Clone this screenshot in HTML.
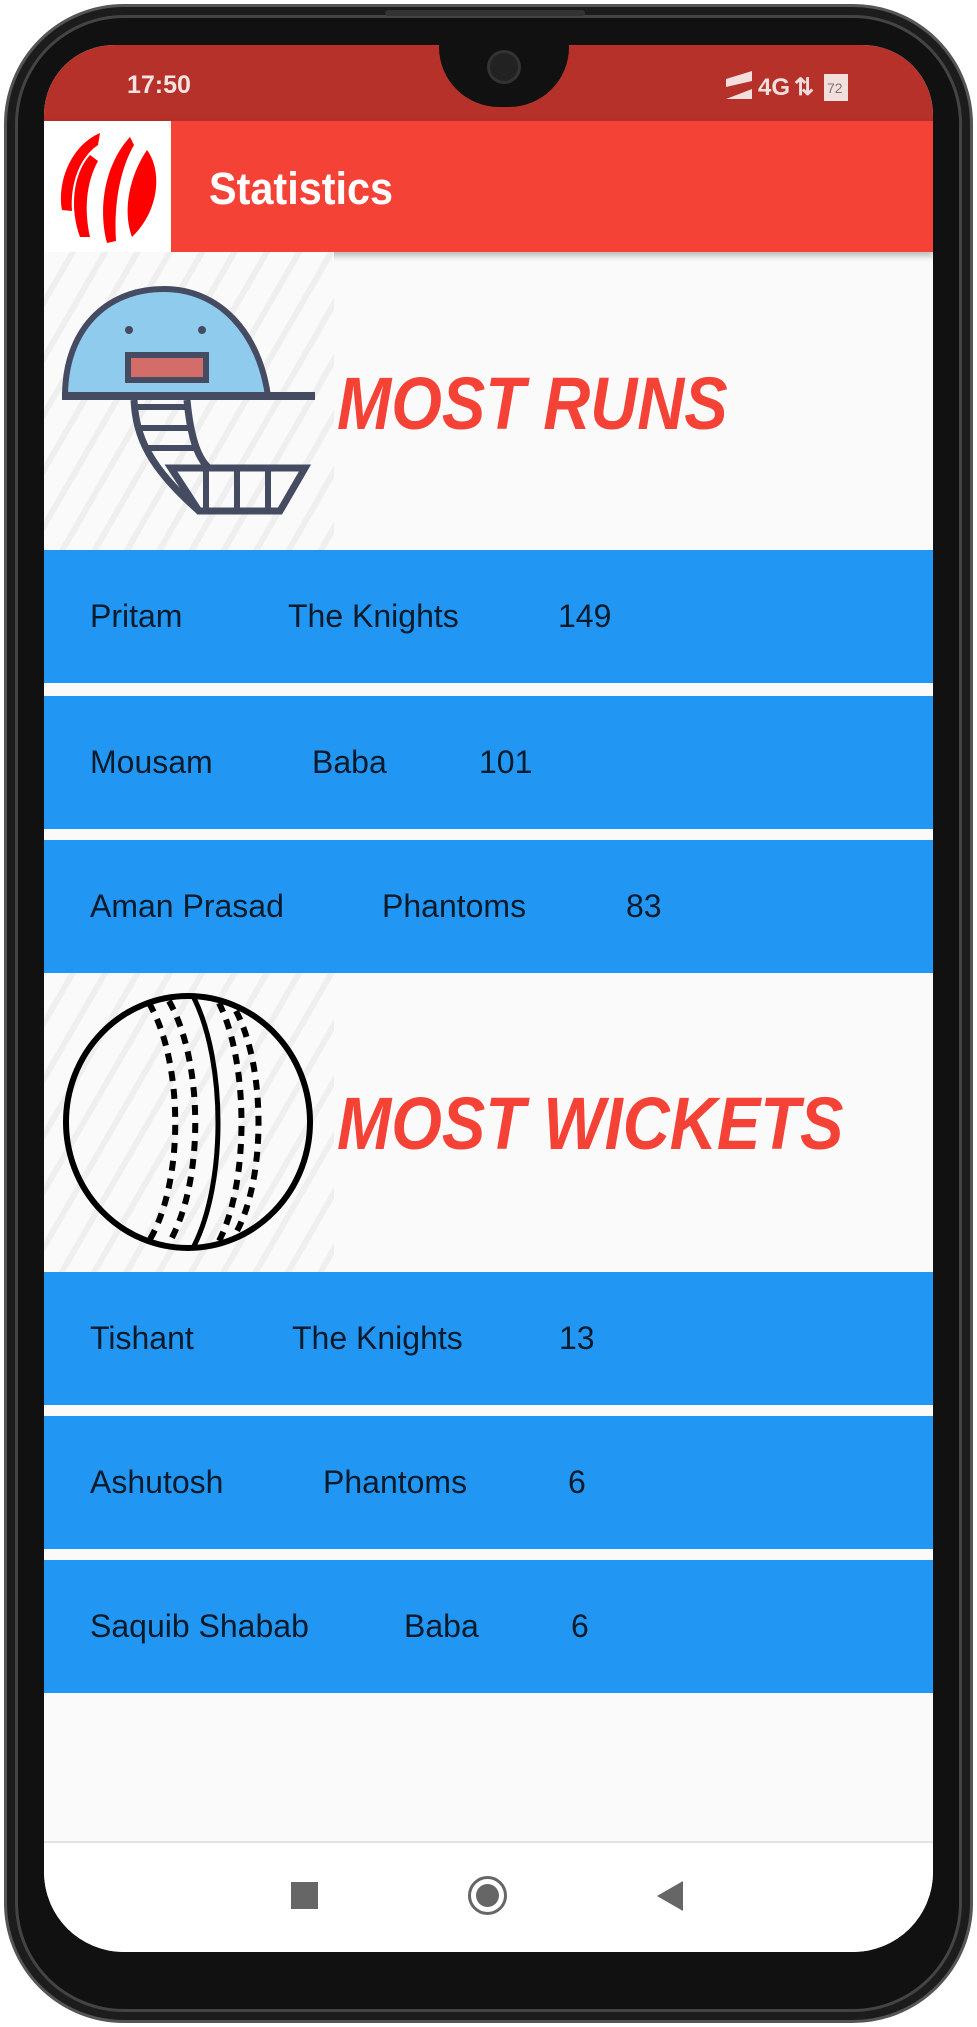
<!DOCTYPE html>
<html><head><meta charset="utf-8"><style>
*{margin:0;padding:0;box-sizing:border-box}
body{width:977px;height:2027px;background:#fff;position:relative;overflow:hidden;font-family:"Liberation Sans",sans-serif}
.abs{position:absolute}
.phone{left:4px;top:4px;width:969px;height:2019px;background:#111;border-radius:120px;border:3px solid #555;box-shadow:inset 0 0 0 8px #1c1c1c, inset 0 0 0 11px #444}
.screen{left:44px;top:45px;width:889px;height:1907px;background:#fafafa;border-radius:70px 70px 80px 80px;overflow:hidden}
.status{left:0;top:0;width:889px;height:76px;background:#b5312a}
.appbar{left:0;top:76px;width:889px;height:131px;background:#f44336;box-shadow:0 4px 6px rgba(0,0,0,.25)}
.row{left:0;width:889px;height:133px;background:#2196f3}
.row span{position:absolute;top:0;line-height:133px;font-size:32px;color:#0b1b2b}
.big{font-weight:bold;font-style:italic;color:#f44336;font-size:74px;transform:scaleX(.88);transform-origin:left top;white-space:nowrap}
.stripes{background:repeating-linear-gradient(120deg,#fafafa 0 22px,#efefef 22px 28px)}
</style></head><body>
<div class="abs phone"></div>
<div class="abs" style="left:385px;top:10px;width:200px;height:6px;background:#333;border-radius:3px"></div>
<div class="abs screen">
  <div class="abs status"></div>
  <div class="abs" style="left:395px;top:0;width:130px;height:62px;background:#111;border-radius:0 0 60px 60px"></div>
  <div class="abs" style="left:446px;top:8px;width:28px;height:28px;background:#222;border-radius:50%;box-shadow:0 0 0 3px #333"></div>
  <div class="abs" style="left:83px;top:26px;color:#f3e4e2;font-size:25px;font-weight:bold">17:50</div>
  <svg class="abs" style="left:680px;top:24px" width="190" height="34">
    <polygon points="2,10 28,2 28,12 2,18" fill="#f3dede"/><polygon points="2,30 28,20 28,30" fill="#f3dede"/>
    <text x="34" y="26" fill="#f3dede" font-size="24" font-weight="bold" font-family="Liberation Sans">4G</text>
    <text x="70" y="26" fill="#f3dede" font-size="24" font-weight="bold" font-family="Liberation Sans">⇅</text>
    <rect x="100" y="5" width="24" height="27" fill="#f3dede"/><text x="103" y="24" font-size="14" fill="#777" font-family="Liberation Sans">72</text>
  </svg>
  <div class="abs appbar"></div>
  <div class="abs" style="left:0;top:76px;width:127px;height:131px;background:#fff"></div>
  <svg class="abs" style="left:8px;top:80px" width="115" height="125">
    <path d="M48 8 C20 20 5 55 10 85 L20 86 C18 58 28 32 46 20 Z" fill="#f00"/>
    <path d="M28 112 C18 85 20 50 38 30 L46 36 C34 58 32 85 38 112 Z" fill="#f00"/>
    <path d="M55 118 C46 85 52 40 78 12 L82 20 C66 48 62 85 64 116 Z" fill="#f00"/>
    <path d="M80 112 C70 85 78 50 95 25 C110 45 108 85 80 112 Z" fill="#f00"/>
  </svg>
  <div class="abs" style="left:165px;top:118px;color:#fff;font-size:45px;font-weight:bold;transform:scaleX(.92);transform-origin:left">Statistics</div>

  <div class="abs stripes" style="left:0;top:207px;width:290px;height:298px"></div>
  <svg class="abs" style="left:0;top:207px" width="290" height="298">
    <path d="M21 144 C21 80 60 37 120 37 C175 37 215 80 224 144 Z" fill="#8ecbec" stroke="#454b60" stroke-width="6"/>
    <line x1="18" y1="144" x2="271" y2="144" stroke="#454b60" stroke-width="8"/>
    <rect x="84" y="103" width="78" height="25" fill="#d36d6a" stroke="#454b60" stroke-width="6"/>
    <circle cx="85" cy="78" r="4" fill="#454b60"/><circle cx="158" cy="78" r="4" fill="#454b60"/>
    <path d="M90 148 C92 185 105 215 155 259" fill="none" stroke="#454b60" stroke-width="7"/>
    <path d="M143 148 C146 180 152 205 165 216" fill="none" stroke="#454b60" stroke-width="7"/>
    <line x1="92" y1="155" x2="145" y2="155" stroke="#454b60" stroke-width="6"/>
    <line x1="95" y1="176" x2="149" y2="176" stroke="#454b60" stroke-width="6"/>
    <line x1="102" y1="196" x2="155" y2="196" stroke="#454b60" stroke-width="6"/>
    <path d="M127 216 L261 216 L236 259 L155 259 Z" fill="none" stroke="#454b60" stroke-width="7"/>
    <line x1="162" y1="216" x2="162" y2="259" stroke="#454b60" stroke-width="6"/>
    <line x1="193" y1="216" x2="193" y2="259" stroke="#454b60" stroke-width="6"/>
    <line x1="224" y1="216" x2="224" y2="259" stroke="#454b60" stroke-width="6"/>
  </svg>
  <div class="abs big" style="left:293px;top:316px">MOST RUNS</div>

  <div class="abs row" style="top:505px"><span style="left:46px">Pritam</span><span style="left:244px">The Knights</span><span style="left:514px">149</span></div>
  <div class="abs row" style="top:651px"><span style="left:46px">Mousam</span><span style="left:268px">Baba</span><span style="left:435px">101</span></div>
  <div class="abs row" style="top:795px"><span style="left:46px">Aman Prasad</span><span style="left:338px">Phantoms</span><span style="left:582px">83</span></div>

  <div class="abs stripes" style="left:0;top:928px;width:290px;height:299px"></div>
  <svg class="abs" style="left:0;top:928px" width="290" height="299">
    <ellipse cx="144" cy="149" rx="122" ry="126" fill="none" stroke="#000" stroke-width="6"/>
    <path d="M150 25 C182 90 182 210 150 273" fill="none" stroke="#000" stroke-width="5"/>
    <path d="M105 30 C140 90 140 210 105 268" fill="none" stroke="#000" stroke-width="6" stroke-dasharray="10 8"/>
    <path d="M125 28 C160 90 160 210 125 270" fill="none" stroke="#000" stroke-width="6" stroke-dasharray="10 8"/>
    <path d="M175 30 C205 90 205 210 175 268" fill="none" stroke="#000" stroke-width="6" stroke-dasharray="10 8"/>
    <path d="M192 38 C222 95 222 205 192 260" fill="none" stroke="#000" stroke-width="6" stroke-dasharray="10 8"/>
  </svg>
  <div class="abs big" style="left:293px;top:1036px">MOST WICKETS</div>

  <div class="abs row" style="top:1227px"><span style="left:46px">Tishant</span><span style="left:248px">The Knights</span><span style="left:515px">13</span></div>
  <div class="abs row" style="top:1371px"><span style="left:46px">Ashutosh</span><span style="left:279px">Phantoms</span><span style="left:524px">6</span></div>
  <div class="abs row" style="top:1515px"><span style="left:46px">Saquib Shabab</span><span style="left:360px">Baba</span><span style="left:527px">6</span></div>

  <div class="abs" style="left:0;top:1796px;width:889px;height:111px;background:#fff;border-top:2px solid #e4e4e4"></div>
  <div class="abs" style="left:247px;top:1837px;width:27px;height:27px;background:#666"></div>
  <div class="abs" style="left:424px;top:1831px;width:39px;height:39px;border:3px solid #666;border-radius:50%"></div>
  <div class="abs" style="left:432px;top:1839px;width:23px;height:23px;background:#666;border-radius:50%"></div>
  <div class="abs" style="left:613px;top:1836px;width:0;height:0;border-top:15px solid transparent;border-bottom:15px solid transparent;border-right:26px solid #666"></div>
</div>
</body></html>
